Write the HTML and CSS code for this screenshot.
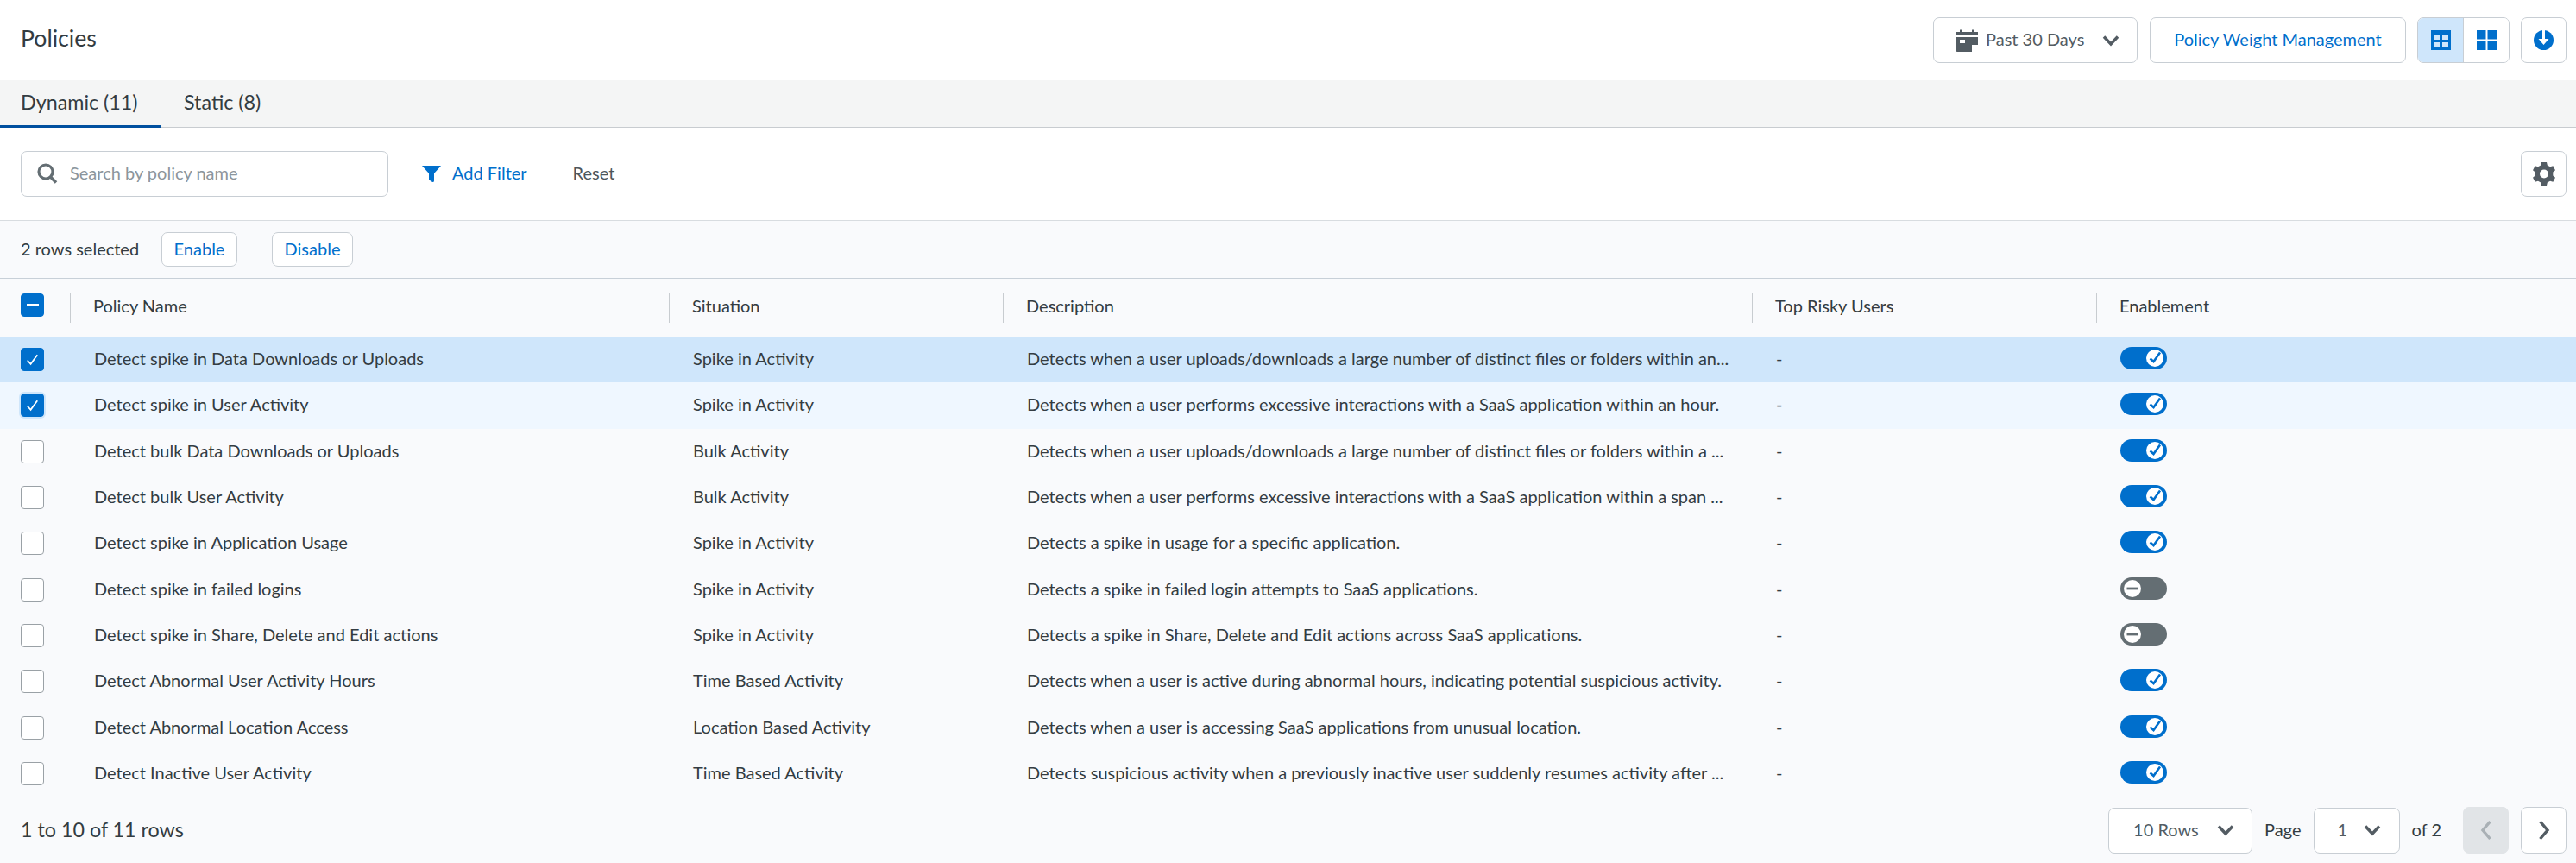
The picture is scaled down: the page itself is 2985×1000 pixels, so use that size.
FILE: index.html
```html
<!DOCTYPE html>
<html lang="en">
<head>
<meta charset="utf-8">
<title>Policies</title>
<link rel="stylesheet" href="styles.css">
</head>
<body>
<svg class="defs" width="0" height="0" aria-hidden="true">
  <symbol id="chev" viewBox="0 0 20 14"><path d="M2 2.500 10 11 18 2.500" fill="none" stroke="currentColor" stroke-width="3.400"/></symbol>
  <symbol id="sw-on" viewBox="0 0 20 20"><circle cx="10" cy="10" r="10" fill="#fff"/><path d="M4.500 10.500 8.500 14 16 3.500" fill="none" stroke="#006fcc" stroke-width="2.600"/></symbol>
  <symbol id="sw-off" viewBox="0 0 20 20"><circle cx="10" cy="10" r="10" fill="#fff"/><rect x="3.500" y="8.600" width="13" height="2.800" fill="#646e73"/></symbol>
</svg>
<main class="page">
  <header class="top">
    <h1 class="title">Policies</h1>
    <div class="top-actions">
      <button class="btn date-btn">
        <svg class="ico-cal" viewBox="0 0 26 27"><path fill="#535c63" d="M0 8V4h5V1.500h2V4h12V1.500h2V4h5v4zM0 10h26v9h-7v8H2a2 2 0 0 1-2-2zM5 13v4h6v-4z"/></svg>
        <span>Past 30 Days</span>
        <svg class="chev" viewBox="0 0 20 14"><use href="#chev"/></svg>
      </button>
      <button class="btn link-btn weight-btn">Policy Weight Management</button>
      <div class="seg">
        <span class="seg-item seg-on">
          <svg class="ico-seg" viewBox="0 0 23 23"><path fill="#006fcc" d="M0 0h23v23H0z"/><path fill="#cfe6fb" d="M3 6h7v5H3zM13 6h7v5h-7zM3 14h7v5H3zM13 14h7v5h-7z"/></svg>
        </span>
        <span class="seg-item">
          <svg class="ico-seg" viewBox="0 0 23 23"><path fill="#006fcc" d="M0 0h10.500v10.500H0zM12.500 0H23v10.500H12.500zM0 12.500h10.500V23H0zM12.500 12.500H23V23H12.500z"/></svg>
        </span>
      </div>
      <button class="btn icon-btn">
        <svg class="ico-dl" viewBox="0 0 23 23"><circle cx="11.500" cy="11.500" r="11.500" fill="#006fcc"/><path fill="#fff" d="M10 0h3v10h4.500l-6 7-6-7H10z"/></svg>
      </button>
    </div>
  </header>

  <nav class="tabs">
    <a class="tab tab-on">Dynamic (11)</a>
    <a class="tab">Static (8)</a>
  </nav>

  <section class="filters">
    <div class="search">
      <svg class="ico-search" viewBox="0 0 24 24"><circle cx="10" cy="10" r="8" fill="none" stroke="#646e73" stroke-width="3.200"/><path d="M15 15.500 22 22.500" stroke="#646e73" stroke-width="3.600"/></svg>
      <span class="placeholder">Search by policy name</span>
    </div>
    <a class="add-filter">
      <svg class="ico-filter" viewBox="0 0 22 19"><path fill="#006fcc" d="M0 0h22l-8 9v8.500a1.500 1.500 0 0 1-3 0 8 8 0 0 1-3-1V9z"/></svg>
      Add Filter
    </a>
    <a class="reset">Reset</a>
    <button class="btn icon-btn gear-btn">
      <svg class="ico-gear" viewBox="0 0 24 27"><path fill="#535c63" fill-rule="evenodd" d="M9 0h6l.8 3.600 3.200 1.700 3.400-1.100 2.600 5-2.700 2.400v3.800l2.700 2.400-2.600 5-3.400-1.100-3.200 1.700L15 27H9l-.8-3.600L5 21.700l-3.400 1.100-2.600-5 2.700-2.400v-3.800L-1 9.200l2.600-5L5 5.300l3.200-1.700zM12 8.500a5 5 0 1 0 0 10 5 5 0 0 0 0-10z"/></svg>
    </button>
  </section>

  <section class="bulk">
    <span class="bulk-count">2 rows selected</span>
    <button class="btn link-btn small-btn enable-btn">Enable</button>
    <button class="btn link-btn small-btn disable-btn">Disable</button>
  </section>

  <section class="table">
    <div class="row head">
      <div class="cell chk"><span class="box on"><i class="minus"></i></span></div>
      <div class="cell sep">Policy Name</div>
      <div class="cell sep">Situation</div>
      <div class="cell sep">Description</div>
      <div class="cell sep">Top Risky Users</div>
      <div class="cell sep">Enablement</div>
    </div>
    <div class="row sel">
      <div class="cell chk"><span class="box on"><svg viewBox="0 0 26 26"><path d="M7 13.500 11 18 19 7" fill="none" stroke="#fff" stroke-width="1.800"/></svg></span></div>
      <div class="cell">Detect spike in Data Downloads or Uploads</div>
      <div class="cell">Spike in Activity</div>
      <div class="cell">Detects when a user uploads/downloads a large number of distinct files or folders within an...</div>
      <div class="cell">-</div>
      <div class="cell"><span class="sw"><svg viewBox="0 0 20 20"><use href="#sw-on"/></svg></span></div>
    </div>
    <div class="row sel-soft">
      <div class="cell chk"><span class="box on ring"><svg viewBox="0 0 26 26"><path d="M7 13.500 11 18 19 7" fill="none" stroke="#fff" stroke-width="1.800"/></svg></span></div>
      <div class="cell">Detect spike in User Activity</div>
      <div class="cell">Spike in Activity</div>
      <div class="cell">Detects when a user performs excessive interactions with a SaaS application within an hour.</div>
      <div class="cell">-</div>
      <div class="cell"><span class="sw"><svg viewBox="0 0 20 20"><use href="#sw-on"/></svg></span></div>
    </div>
    <div class="row">
      <div class="cell chk"><span class="box"></span></div>
      <div class="cell">Detect bulk Data Downloads or Uploads</div>
      <div class="cell">Bulk Activity</div>
      <div class="cell">Detects when a user uploads/downloads a large number of distinct files or folders within a ...</div>
      <div class="cell">-</div>
      <div class="cell"><span class="sw"><svg viewBox="0 0 20 20"><use href="#sw-on"/></svg></span></div>
    </div>
    <div class="row">
      <div class="cell chk"><span class="box"></span></div>
      <div class="cell">Detect bulk User Activity</div>
      <div class="cell">Bulk Activity</div>
      <div class="cell">Detects when a user performs excessive interactions with a SaaS application within a span ...</div>
      <div class="cell">-</div>
      <div class="cell"><span class="sw"><svg viewBox="0 0 20 20"><use href="#sw-on"/></svg></span></div>
    </div>
    <div class="row">
      <div class="cell chk"><span class="box"></span></div>
      <div class="cell">Detect spike in Application Usage</div>
      <div class="cell">Spike in Activity</div>
      <div class="cell">Detects a spike in usage for a specific application.</div>
      <div class="cell">-</div>
      <div class="cell"><span class="sw"><svg viewBox="0 0 20 20"><use href="#sw-on"/></svg></span></div>
    </div>
    <div class="row">
      <div class="cell chk"><span class="box"></span></div>
      <div class="cell">Detect spike in failed logins</div>
      <div class="cell">Spike in Activity</div>
      <div class="cell">Detects a spike in failed login attempts to SaaS applications.</div>
      <div class="cell">-</div>
      <div class="cell"><span class="sw off"><svg viewBox="0 0 20 20"><use href="#sw-off"/></svg></span></div>
    </div>
    <div class="row">
      <div class="cell chk"><span class="box"></span></div>
      <div class="cell">Detect spike in Share, Delete and Edit actions</div>
      <div class="cell">Spike in Activity</div>
      <div class="cell">Detects a spike in Share, Delete and Edit actions across SaaS applications.</div>
      <div class="cell">-</div>
      <div class="cell"><span class="sw off"><svg viewBox="0 0 20 20"><use href="#sw-off"/></svg></span></div>
    </div>
    <div class="row">
      <div class="cell chk"><span class="box"></span></div>
      <div class="cell">Detect Abnormal User Activity Hours</div>
      <div class="cell">Time Based Activity</div>
      <div class="cell">Detects when a user is active during abnormal hours, indicating potential suspicious activity.</div>
      <div class="cell">-</div>
      <div class="cell"><span class="sw"><svg viewBox="0 0 20 20"><use href="#sw-on"/></svg></span></div>
    </div>
    <div class="row">
      <div class="cell chk"><span class="box"></span></div>
      <div class="cell">Detect Abnormal Location Access</div>
      <div class="cell">Location Based Activity</div>
      <div class="cell">Detects when a user is accessing SaaS applications from unusual location.</div>
      <div class="cell">-</div>
      <div class="cell"><span class="sw"><svg viewBox="0 0 20 20"><use href="#sw-on"/></svg></span></div>
    </div>
    <div class="row">
      <div class="cell chk"><span class="box"></span></div>
      <div class="cell">Detect Inactive User Activity</div>
      <div class="cell">Time Based Activity</div>
      <div class="cell">Detects suspicious activity when a previously inactive user suddenly resumes activity after ...</div>
      <div class="cell">-</div>
      <div class="cell"><span class="sw"><svg viewBox="0 0 20 20"><use href="#sw-on"/></svg></span></div>
    </div>
  </section>

  <footer class="foot">
    <span class="foot-count">1 to 10 of 11 rows</span>
    <div class="pager">
      <button class="btn select rows-select"><span>10 Rows</span><svg class="chev" viewBox="0 0 20 14"><use href="#chev"/></svg></button>
      <span class="pager-label">Page</span>
      <button class="btn select page-select"><span>1</span><svg class="chev" viewBox="0 0 20 14"><use href="#chev"/></svg></button>
      <span class="pager-label pager-of">of 2</span>
      <button class="btn page-btn disabled"><svg viewBox="0 0 14 24"><path d="M11.500 2 3 12l8.500 10" fill="none" stroke="#a9b0b5" stroke-width="3.400"/></svg></button>
      <button class="btn page-btn"><svg viewBox="0 0 14 24"><path d="M2.500 2 11 12 2.500 22" fill="none" stroke="#535c63" stroke-width="3.400"/></svg></button>
    </div>
  </footer>
</main>
</body>
</html>
```

FILE: styles.css
```css
* { box-sizing: border-box; }
html, body { margin: 0; padding: 0; }
body {
  background: #fff;
  color: #333c42;
  font-family: Lato, "Liberation Sans", sans-serif;
  font-size: 20px;
  height: 1000px;
  overflow: hidden;
}
.defs { position: absolute; }
.page { width: 2985px; height: 1000px; display: flex; flex-direction: column; }

.btn {
  font: inherit;
  background: #fff;
  border: 1px solid #c8ced4;
  border-radius: 7px;
  color: #535c63;
  padding: 0;
  height: 53px;
  display: inline-flex;
  align-items: center;
  justify-content: center;
}
.link-btn { color: #006fcc; padding-bottom: 3px; }

.top {
  height: 93px;
  display: flex;
  align-items: flex-start;
  justify-content: space-between;
  padding: 20px 11px 0 24px;
}
.title { font-size: 26.67px; font-weight: 400; margin: 0; line-height: 49px; color: #333c42; }
.top-actions { display: flex; align-items: center; }
.date-btn { width: 237px; justify-content: flex-start; padding-left: 25px; }
.date-btn span { padding-bottom: 3px; }
.ico-cal { width: 26px; height: 27px; margin-right: 9px; }
.chev { width: 20px; height: 14px; color: #535c63; }
.date-btn .chev { margin-left: 21px; }
.weight-btn { width: 297px; margin-left: 14px; }
.seg {
  display: flex;
  width: 107px;
  height: 53px;
  margin-left: 13px;
  border: 1px solid #c8ced4;
  border-radius: 7px;
  overflow: hidden;
}
.seg-item { flex: 1; display: flex; align-items: center; justify-content: center; background: #fff; }
.seg-on { background: #cfe6fb; border-right: 1px solid #c8ced4; }
.ico-seg { width: 23px; height: 23px; }
.icon-btn { width: 53px; margin-left: 13px; }
.ico-dl { width: 23px; height: 23px; }

.tabs {
  height: 55px;
  background: #f4f5f5;
  border-bottom: 1px solid #c8ccd0;
  display: flex;
}
.tab { padding: 0 27px 0 24px; line-height: 50px; font-size: 23.3px; color: #333c42; height: 55px; }
.tab-on { border-bottom: 3px solid #00509f; width: 186px; padding-right: 0; }
.tab + .tab { padding-left: 27px; }

.filters {
  height: 108px;
  border-bottom: 1px solid #d8dce0;
  display: flex;
  align-items: center;
  padding: 0 11px 1px 24px;
}
.search {
  width: 426px;
  height: 53px;
  border: 1px solid #c8ced4;
  border-radius: 7px;
  display: flex;
  align-items: center;
  padding-left: 18px;
}
.ico-search { width: 24px; height: 24px; margin-right: 14px; }
.placeholder { color: #8c959b; padding-bottom: 3px; }
.add-filter { margin-left: 39px; color: #006fcc; display: flex; align-items: center; padding-bottom: 3px; }
.ico-filter { width: 22px; height: 19px; margin-right: 13px; margin-top: 3px; }
.reset { margin-left: 53px; color: #4d565c; padding-bottom: 3px; }
.gear-btn { margin-left: auto; }
.ico-gear { width: 24px; height: 27px; overflow: visible; }

.bulk {
  height: 67px;
  background: #f9fafc;
  border-bottom: 1px solid #c8d0d8;
  display: flex;
  align-items: center;
  padding: 0 0 0 24px;
}
.bulk-count { width: 163px; padding-bottom: 3px; }
.small-btn { height: 40px; }
.enable-btn { width: 88px; }
.disable-btn { width: 94px; margin-left: 40px; }

.table { background: #f9fafc; height: 600px; display: flex; flex-direction: column; }
.row {
  display: grid;
  grid-template-columns: 81px 694px 387px 868px 399px 1fr;
  height: 53.3px;
  align-items: center;
}
.head { height: 67px; }
.sel { background: #cfe6fb; }
.sel-soft { background: #eff7ff; }
.cell { padding-left: 28px; padding-bottom: 3px; min-width: 0; white-space: nowrap; }
.cell.chk { padding-left: 24px; padding-bottom: 0; display: flex; align-items: center; }
.cell.sep { padding-left: 26px; padding-bottom: 0; height: 34px; line-height: 28px; border-left: 1px solid #c8ccd0; }
.head .chk .box { margin-top: -6px; }

.box {
  width: 27px;
  height: 27px;
  border-radius: 4px;
  background: #fff;
  border: 1px solid #9aa1a6;
  display: flex;
  align-items: center;
  justify-content: center;
}
.box.on { background: #006fcc; border-color: #006fcc; }
.box svg { width: 26px; height: 26px; }
.box.ring { box-shadow: 0 0 0 2px #cfe6fb; }
.minus { width: 14px; height: 3px; background: #fff; }

.sw {
  width: 54px;
  height: 26px;
  border-radius: 13px;
  background: #006fcc;
  display: flex;
  align-items: center;
  justify-content: flex-end;
  padding-right: 4px;
}
.sw svg { width: 20px; height: 20px; }
.sw.off { background: #646e73; justify-content: flex-start; padding: 0 0 0 4px; }

.foot {
  flex: 1;
  border-top: 1px solid #c8ccd0;
  background: #f9fafc;
  display: flex;
  align-items: center;
  justify-content: space-between;
  padding: 0 11px 0 24px;
}
.foot-count { font-size: 23.3px; padding-bottom: 2px; }
.pager { display: flex; align-items: center; }
.select { justify-content: space-between; font-size: 20px; color: #535c63; }
.select span { padding-bottom: 2px; }
.rows-select { width: 167px; padding: 0 20px 0 28px; }
.page-select { width: 100px; padding: 0 21px 0 27px; }
.pager-label { margin-left: 14px; margin-right: 14px; padding-bottom: 2px; }
.pager-of { margin-right: 25px; }
.page-btn { width: 53px; height: 54px; }
.page-btn svg { width: 14px; height: 24px; }
.page-btn + .page-btn { margin-left: 14px; }
.disabled { background: #e1e4e7; border-color: #e1e4e7; }
```
